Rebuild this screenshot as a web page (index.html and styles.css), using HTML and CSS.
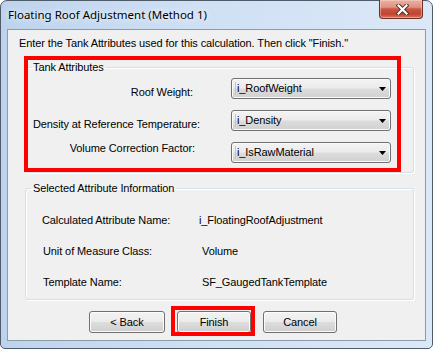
FILE: index.html
```html
<!DOCTYPE html>
<html>
<head>
<meta charset="utf-8">
<link rel="stylesheet" href="styles.css">
</head>
<body>
<div class="window">
  <div class="titlebar">
    <span class="title">Floating Roof Adjustment (Method 1)</span>
    <div class="close">
      <svg class="close-x" width="13" height="11" viewBox="0 0 13 11">
        <path d="M2.5 1.5 L10.5 9.5 M10.5 1.5 L2.5 9.5" stroke="#4a2b28" stroke-width="4" stroke-linecap="square" fill="none"/>
        <path d="M2.5 1.5 L10.5 9.5 M10.5 1.5 L2.5 9.5" stroke="#ffffff" stroke-width="2.2" stroke-linecap="square" fill="none"/>
      </svg>
    </div>
  </div>
  <div class="client">
    <p class="intro">Enter the Tank Attributes used for this calculation. Then click "Finish."</p>

    <fieldset class="group group-attrs">
      <legend>Tank Attributes</legend>
      <div class="attr-grid">
        <span class="lbl lbl-roof">Roof Weight:</span>
        <div class="combo"><span class="combo-text">i_RoofWeight</span><svg class="arrow" width="7" height="4" viewBox="0 0 7 4"><polygon points="0,0 7,0 3.5,4" fill="#000"/></svg></div>
        <span class="lbl lbl-density">Density at Reference Temperature:</span>
        <div class="combo"><span class="combo-text">i_Density</span><svg class="arrow" width="7" height="4" viewBox="0 0 7 4"><polygon points="0,0 7,0 3.5,4" fill="#000"/></svg></div>
        <span class="lbl lbl-volume">Volume Correction Factor:</span>
        <div class="combo"><span class="combo-text">i_IsRawMaterial</span><svg class="arrow" width="7" height="4" viewBox="0 0 7 4"><polygon points="0,0 7,0 3.5,4" fill="#000"/></svg></div>
      </div>
    </fieldset>

    <fieldset class="group group-info">
      <legend>Selected Attribute Information</legend>
      <div class="info-grid">
        <span class="info-lbl info-first">Calculated Attribute Name:</span>
        <span class="info-val info-first-val">i_FloatingRoofAdjustment</span>
        <span class="info-lbl">Unit of Measure Class:</span>
        <span class="info-val">Volume</span>
        <span class="info-lbl">Template Name:</span>
        <span class="info-val">SF_GaugedTankTemplate</span>
      </div>
    </fieldset>

    <div class="buttons">
      <button class="btn btn-back">&lt; Back</button>
      <span class="finish-wrap">
        <button class="btn btn-finish">Finish</button>
        <span class="highlight highlight-finish"></span>
      </span>
      <button class="btn btn-cancel">Cancel</button>
    </div>

    <div class="highlight highlight-attrs"></div>
  </div>
</div>
</body>
</html>
```

FILE: styles.css
```css
html, body {
  margin: 0;
  padding: 0;
}

body {
  width: 433px;
  height: 349px;
  overflow: hidden;
  background: #ffffff;
  font-family: "Liberation Sans", Arial, sans-serif;
  font-size: 11px;
  letter-spacing: -0.1px;
  color: #000000;
}

.window {
  box-sizing: border-box;
  width: 433px;
  height: 349px;
  border: 1px solid #4f5b68;
  border-radius: 7px 7px 5px 5px;
  background: linear-gradient(to right, #bdd3ed 0%, #cfe0f4 45%, #dbe8f7 100%);
  padding: 0 6px 7px 6px;
  display: flex;
  flex-direction: column;
}

.titlebar {
  height: 28px;
  flex: none;
  display: flex;
  align-items: flex-start;
}

.title {
  font-family: "Noto Sans", "Liberation Sans", sans-serif;
  font-size: 11.5px;
  letter-spacing: 0;
  line-height: 16px;
  margin-top: 6px;
  padding-left: 1px;
  color: #000000;
  text-shadow: 0 0 8px rgba(255, 255, 255, 0.9), 0 0 4px rgba(255, 255, 255, 0.7);
}

.close {
  box-sizing: border-box;
  margin-left: auto;
  margin-right: 3px;
  width: 44px;
  height: 19px;
  margin-top: -1px;
  border: 1px solid #6e2f26;
  border-top: none;
  border-radius: 0 0 4px 4px;
  background: linear-gradient(#eab0a2 0%, #e09282 40%, #c95644 50%, #c3432f 78%, #d37763 100%);
  box-shadow: inset 0 0 0 1px rgba(255, 220, 210, 0.45);
  display: flex;
  align-items: center;
  justify-content: center;
}

.close-x {
  display: block;
  margin-top: 1px;
  margin-left: 2px;
}

.client {
  flex: 1;
  position: relative;
  background: #f0f0f0;
  border: 1px solid #8d9aa8;
  display: flex;
  flex-direction: column;
}

.intro {
  margin: 7px 0 0 11px;
  line-height: 13px;
}

.group {
  border: 1px solid #d5dfe5;
  border-radius: 3px;
  padding: 0;
  min-width: 0;
  margin: 11px 11px 0 17px;
  box-shadow: inset 1px 1px 0 #ffffff, 1px 1px 0 #ffffff;
}

.group legend {
  padding: 0 2px;
  margin-left: 5px;
  line-height: 13px;
}

.group-info {
  margin-top: 9px;
}

.attr-grid {
  display: grid;
  grid-template-columns: 171px 160px;
  column-gap: 34px;
  row-gap: 11px;
  padding: 4px 0 9px 0;
}

.lbl {
  text-align: right;
  align-self: start;
  line-height: 13px;
}

.lbl-roof {
  margin-top: 8px;
  padding-right: 4px;
}

.lbl-density {
  margin-top: 8px;
  margin-right: -3px;
}

.lbl-volume {
  margin-top: 0;
  padding-right: 2px;
}

.combo {
  box-sizing: border-box;
  height: 21px;
  border: 1px solid #707070;
  border-radius: 3px;
  background: linear-gradient(#f3f3f3 0%, #ebebeb 48%, #dddddd 52%, #d0d0d0 100%);
  box-shadow: inset 0 0 0 1px #fafafa;
  display: flex;
  align-items: center;
  padding-left: 3px;
}

.combo-text {
  line-height: 13px;
  padding-left: 1px;
  border-left: 1px solid #c4c4c4;
  padding-right: 4px;
}

.arrow {
  display: block;
  margin-left: auto;
  margin-right: 4px;
}

.info-grid {
  display: grid;
  grid-template-columns: 159px auto;
  grid-auto-rows: 31px;
  align-items: center;
  padding: 10px 0 1px 17px;
}

.info-lbl,
.info-val {
  line-height: 13px;
}

.info-first {
  margin-left: -1px;
}

.info-first-val {
  margin-left: -3px;
}

.buttons {
  display: flex;
  align-items: flex-start;
  gap: 12px;
  padding-left: 81px;
  margin-top: 11px;
}

.btn {
  box-sizing: border-box;
  height: 22px;
  width: 74px;
  margin: 0;
  padding: 0;
  border: 1px solid #707070;
  border-radius: 3px;
  background: linear-gradient(#f3f3f3 0%, #ebebeb 48%, #dddddd 52%, #cfcfcf 100%);
  box-shadow: inset 0 0 0 1px #fbfbfb;
  font-family: "Liberation Sans", Arial, sans-serif;
  font-size: 11px;
  letter-spacing: -0.1px;
  color: #000000;
  line-height: 20px;
  text-align: center;
}

.btn-back {
  width: 76px;
}

.finish-wrap {
  position: relative;
  display: block;
}

.btn-finish {
  display: block;
}

.highlight {
  position: absolute;
  box-sizing: border-box;
  border: 4px solid #ff0000;
  pointer-events: none;
}

.highlight-finish {
  top: -5px;
  right: -4px;
  bottom: -3px;
  left: -6px;
}

.highlight-attrs {
  left: 16px;
  top: 26px;
  width: 377px;
  height: 116px;
}
```
